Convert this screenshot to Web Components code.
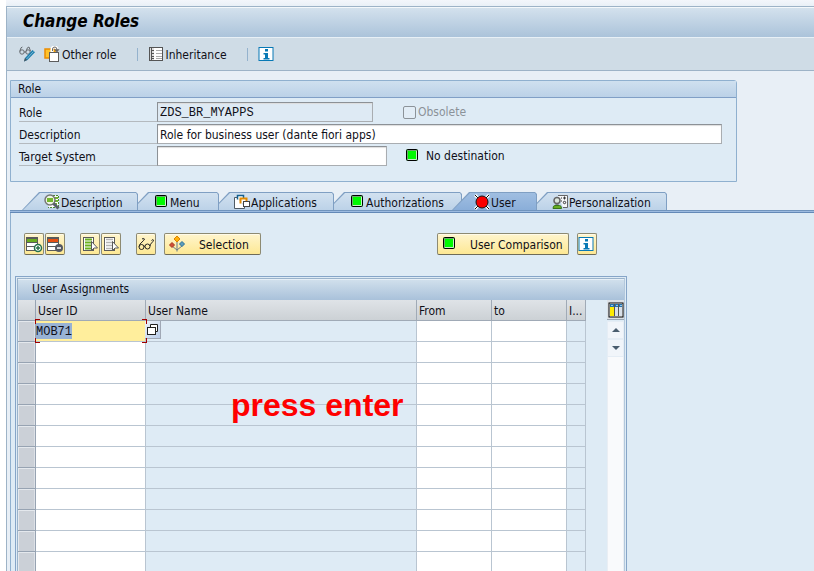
<!DOCTYPE html>
<html lang="en">
<head>
<meta charset="utf-8">
<title>Change Roles</title>
<style>
html,body{margin:0;height:100%;overflow:hidden}
body{font:12px/16px "DejaVu Sans Condensed","Open Sans",sans-serif;color:#101018;background:#fff}
</style>
</head>
<body>
<role-page></role-page>
<script>
const ICONS = {
change:[16,16,`<g fill="none" stroke="#666b70"><circle cx="3" cy="6" r="2.2"/><circle cx="9" cy="6" r="2.2"/><path d="M.7 5.5 2 1.8 3.4 1M7 5.5 8.4 1.8 10 1 11.5 5M5 6h2"/></g><path d="M5 15.5 6 12 13.5 4 16 6.3 8.5 14Z" fill="#1d7fae"/><path d="m7.5 13 7-7.5" stroke="#7db7d2"/><path d="m5 15.5 1-3.5 2 2Z" fill="#4c555c"/>`],
other:[16,16,`<rect x="1" y="3" width="10" height="9" fill="#ffc32b" stroke="#ec8c00" stroke-width="1.5"/><rect x="5.5" y="6.5" width="9" height="9" fill="#fff" stroke="#5c5c5c"/><path d="M8 6V3q0-2 3-2 2 0 2 3" fill="none" stroke="#fff" stroke-width="3"/><path d="M8.5 5V3q0-2 2.500-2 2 0 2 3" fill="none" stroke="#666"/><path d="M10 3.300h5.500L13 6.500Z" fill="#666"/>`],
inherit:[16,16,`<rect x="1.500" y="1.500" width="13" height="13" fill="#fff" stroke="#555"/><path d="M2 2h4v12H2z" fill="#ddd"/><path d="M3.500 2v12M4 4.500h2M4 7.500h2M4 10.500h2M4 12.500h2" stroke="#555" fill="none"/><path d="M8 4.500h6M8 7.500h6M8 10.500h6M8 12.500h6" stroke="#aaa" fill="none"/>`],
info:[16,16,`<rect x="1" y="1.500" width="14" height="13" fill="#fff" stroke="#0879b5"/><path d="M7 3h3v2.500H7zM5.500 7H10v5h1.500v1.500h-6V12H7V8.500H5.500z" fill="#0879b5"/>`],
green:[16,16,`<rect x="2.500" y="1.500" width="11" height="11" rx="1" fill="#00f900" stroke="#000"/><path d="M3.500 12V2.500H13" fill="none" stroke="#70a870"/><path d="M12.500 3v8.500H4" fill="none" stroke="#c7efc7"/>`],
red:[16,16,`<path d="M1 1l14 14M15 1 1 15" stroke="#fff" stroke-width="3"/><path d="M1 1l14 14M15 1 1 15" stroke="#111"/><circle cx="8" cy="8" r="6" fill="#fa0000" stroke="#151515"/>`],
desc:[16,16,`<path d="M9 1.500h5.500v12H4" fill="#fff" stroke="#4d8b2e" stroke-dasharray="2 1"/><path d="M11 4h3M11 7h3M10 10h3" stroke="#71b32c" stroke-width="2"/><circle cx="6" cy="6" r="5" fill="#edf5e3" stroke="#777" stroke-width="1.500"/><path d="M3 4h6v4H3z" fill="#75b72e"/><path d="m9.500 9.500 5 5" stroke="#58606a" stroke-width="3"/>`],
apps:[16,16,`<path d="M3 3.500H.500v11h10V13" fill="#fff" stroke="#4f5a65"/><path d="M3.500 5.500v-4h6v3" fill="#fff" stroke="#16618f" stroke-width="1.500"/><path d="M6.500 9.500v-5h6v3" fill="#fff" stroke="#e48b00" stroke-width="2"/><rect x="9.500" y="7.500" width="6" height="5" fill="#fff" stroke="#444"/>`],
person:[16,16,`<path d="M6 1.500h9.500v12H11" fill="#f5f7f9" stroke="#666"/><path d="M9 4h1M11 4h3M12.500 2.500v3M9 7h1" stroke="#333"/><circle cx="12.500" cy="8.500" r="1.200" fill="none" stroke="#333"/><circle cx="5" cy="6.500" r="3" fill="#dce7df" stroke="#666" stroke-width="1.500"/><path d="M5 9v2M3 11h4" stroke="#666"/><path d="M1 14.500q0-3 2-3h4.500q2 0 2 3z" fill="#68ae22" stroke="#397619"/>`],
add:[18,18,`<rect x="1.500" y="2.500" width="11" height="13" fill="#fff" stroke="#5a5a5a"/><rect x="2" y="4" width="10" height="3" fill="#69ad20"/><path d="M1 3.500h12M1 7.500h12M1 11.500h12" stroke="#5a5a5a"/><circle cx="13" cy="13" r="3.500" fill="#fff" stroke="#26714b" stroke-width="1.500"/><path d="M11 13h4M13 11v4" stroke="#26714b" stroke-width="1.500"/>`],
del:[18,18,`<rect x="1.500" y="2.500" width="11" height="13" fill="#fff" stroke="#5a5a5a"/><rect x="2" y="4" width="10" height="3" fill="#e65012"/><path d="M1 3.500h12M1 7.500h12M1 11.500h12" stroke="#5a5a5a"/><circle cx="13" cy="13" r="4" fill="#555963"/><path d="M11 13h4" stroke="#fff" stroke-width="1.500"/>`],
selall:[18,18,`<rect x="2.500" y="2.500" width="10" height="13" fill="#fff" stroke="#5a5a5a"/><path d="M4 4.500h7M4 7.500h7M4 10.500h7M4 13.500h7" stroke="#6bb020" stroke-width="2"/><path d="M10.500 6.500v9l2.500-2.500h3.500Z" fill="#fff" stroke="#5a5a5a"/>`],
desel:[18,18,`<rect x="2.500" y="2.500" width="10" height="13" fill="#fff" stroke="#5a5a5a"/><path d="M4 4.500h7M4 7.500h7M4 10.500h7M4 13.500h7" stroke="#b5b5b5" stroke-width="1.500"/><path d="M10.500 6.500v9l2.500-2.500h3.500Z" fill="#fff" stroke="#5a5a5a"/>`],
glasses:[18,18,`<g fill="none" stroke="#222"><circle cx="4.500" cy="12" r="2.500"/><circle cx="10.500" cy="11.500" r="2.500"/><path d="M2 11.500Q2.500 9 5 7q1.500-1 2.500-3-1.500-1-2.500 0M7 11.500l1-.5M13 11q.5-2 1.500-3 1.500-1 2-3-1-1-2 .5"/></g>`],
diamond:[18,18,`<path d="M9 5v11.500M4 11l5 4 5-4" fill="none" stroke="#687b88"/><path d="m9 1 3 3-3 3-3-3Z" fill="#ffb10a" stroke="#dc8300"/><path d="m4 7.500 2.500 2.500-2.500 2.500L1.500 10Z" fill="#cf4e38" stroke="#a8361f"/><path d="m14 6.500 2.500 2.500-2.500 2.500L11.500 9Z" fill="#5d9dbd" stroke="#246f99"/>`],
match:[14,14,`<path d="M4.500 4V1.500h7v7H9" fill="#fff" stroke="#222"/><rect x="1.500" y="4.500" width="8" height="7" fill="#fff" stroke="#222"/>`],
config:[16,16,`<rect x="1" y="1" width="14" height="14" fill="#fff" stroke="#000"/><rect x="2" y="2" width="12" height="3" fill="#2472ae"/><rect x="2" y="5" width="4" height="9" fill="#ffeb00"/><path d="M7 5h3v9H7zM11 5h3v9h-3z" fill="#d9e0e8"/><path d="M6.500 2v12M10.500 2v12" stroke="#555"/><path d="M3 3.500h2M8 3.500h2M12 3.500h2" stroke="#8fc6ed"/>`],
up:[10,6,`<path d="M1 5 5 1l4 4Z" fill="#4a5d6e"/>`],
down:[10,6,`<path d="M1 1h8L5 5Z" fill="#4a5d6e"/>`]
};
const define = (name, html, setup) => customElements.define(name, class extends HTMLElement {
  connectedCallback(){
    if(this.shadowRoot) return;
    const t=document.createElement('template'); t.innerHTML=html;
    const root=this.attachShadow({mode:'open'});
    root.append(t.content.cloneNode(true));
    if(setup) setup(this,root);
  }
});
define('ui-icon','<style>:host{display:inline-flex;flex:none}svg{display:block}</style><svg aria-hidden="true"></svg>',(el,root)=>{
  const [w,h,body]=ICONS[el.getAttribute('name')], s=root.querySelector('svg');
  s.setAttribute('width',w);s.setAttribute('height',h);s.setAttribute('viewBox',`0 0 ${w} ${h}`);s.innerHTML=body;
});
define('title-bar',`<style>
:host{display:block;border-top:1px solid #f4f8fb;background:linear-gradient(#d3e1ed,#abc3da);border-bottom:1px solid #e8f0f6;padding:3px 16px 6px}
h1{margin:0;font:italic bold 17px/20px "DejaVu Sans Condensed","Open Sans",sans-serif;color:#000}
</style><h1><slot></slot></h1>`);
define('flat-button',`<style>
:host{display:flex}
button{all:unset;display:flex;align-items:center;gap:2px;font:inherit;color:inherit}
span{padding-top:2px}
span:empty{display:none}
</style><button type="button"><slot name="icon"></slot><span></span></button>`,(el,root)=>{
  const l=el.getAttribute('label');
  if(el.hasAttribute('icon-only')) root.querySelector('button').setAttribute('aria-label',l);
  else root.querySelector('span').textContent=l;
});
define('app-toolbar',`<style>
:host{display:flex;align-items:center;height:32px;padding-left:12px;background:#cfdce6;border-bottom:1px solid #9db3c7}
.sep{width:1px;height:13px;margin:0 10px 0 20px;background:#94b2cd}
.first{margin-right:9px}
</style>
<flat-button class="first" icon-only label="Display or change"><ui-icon slot="icon" name="change"></ui-icon></flat-button>
<flat-button label="Other role"><ui-icon slot="icon" name="other"></ui-icon></flat-button><span class="sep"></span>
<flat-button label="Inheritance"><ui-icon slot="icon" name="inherit"></ui-icon></flat-button><span class="sep"></span>
<flat-button icon-only label="Information"><ui-icon slot="icon" name="info"></ui-icon></flat-button>`);
define('group-box',`<style>
:host{display:block;border:1px solid #8fb0cf;border-radius:0 3px 0 0;background:#deebf5}
h2{margin:0;font:inherit;line-height:16px;padding:0 7px;background:linear-gradient(#cfe0ef,#bbd1e7);border-bottom:1px solid #809fc6}
div{padding:4px 14px 15px 8px}
</style><h2></h2><div><slot></slot></div>`,(el,root)=>root.querySelector('h2').textContent=el.getAttribute('heading'));
define('role-form',`<style>
:host{display:grid;gap:2px}
.row{display:flex;align-items:center;height:20px}
label.name{flex:none;box-sizing:border-box;width:138px;height:20px;padding-top:1px;line-height:20px;border-bottom:1px solid #b4babf}
input.t{box-sizing:border-box;height:20px;padding:1px 2px 0;margin:0;border:1px solid #a9adb1;border-top-color:#8c9196;border-left-color:#8c9196;box-shadow:inset 0 1px 1px #ddd;background:#fff;font:inherit;color:inherit;outline:0;border-radius:0}
#role{width:216px;background:#deeaf4;font-family:"Liberation Mono",monospace}
#desc{flex:1;min-width:0}
#target{width:230px}
.after{display:flex;align-items:center;margin-left:30px;gap:2px;color:#8b9299}
.dest{display:flex;align-items:center;margin-left:17px;gap:6px}
input[type=checkbox]{appearance:none;width:13px;height:13px;box-sizing:border-box;margin:0;border:1px solid #8c9399;border-radius:2px;background:#e2edf6}
</style>
<div class="row"><label class="name" for="role">Role</label><input class="t" id="role" value="ZDS_BR_MYAPPS" readonly><label class="after"><input type="checkbox" disabled>Obsolete</label></div>
<div class="row"><label class="name" for="desc">Description</label><input class="t" id="desc" value="Role for business user (dante fiori apps)"></div>
<div class="row"><label class="name" for="target">Target System</label><input class="t" id="target"><span class="dest"><ui-icon name="green"></ui-icon>No destination</span></div>`);
define('tab-item',`<style>
:host{display:block;margin-left:-7px;position:relative;z-index:var(--z)}
:host(:first-child){margin-left:0}
:host([active]){margin-left:-10px}
button{all:unset;box-sizing:border-box;display:grid;width:var(--w);height:18px;background:#7f9fc3;clip-path:polygon(17px 0,calc(100% - 2px) 0,100% 2px,100% 100%,0 100%)}
span{display:flex;align-items:center;gap:1px;padding:2px 0 0 22px;height:16px;white-space:nowrap;background:linear-gradient(#d3e2f0,#bcd2e8);clip-path:polygon(18px 1px,calc(100% - 2px) 1px,calc(100% - 1px) 3px,calc(100% - 1px) 100%,1px 100%)}
b{font-weight:inherit;padding-top:2px}
:host([active]) span{background:linear-gradient(#a1bfe2,#8aaed9)}
</style><button type="button" role="tab"><span><slot name="icon"></slot><b></b></span></button>`,(el,root)=>{
  root.querySelector('button').setAttribute('aria-selected',el.hasAttribute('active'));
  root.querySelector('b').textContent=el.getAttribute('label');
});
customElements.define('tab-strip',class extends HTMLElement{
  connectedCallback(){
    const tabs=[['desc','Description',116],['green','Menu',88],['apps','Applications',122],['green','Authorizations',135],['red','User',85],['person','Personalization',137]];
    this.attachShadow({mode:'open'}).innerHTML=`<style>:host{display:block}
    .tabs{display:flex;padding-left:12px;isolation:isolate}
    .line{height:1px;background:#9dbbe0;border-top:1px solid #7094bd;border-bottom:1px solid #6389b7}
    tab-item{flex:none}</style>
    <div class="tabs" role="tablist">${tabs.map(([i,t,w],n)=>`<tab-item style="--w:${w}px;--z:${t==='User'?9:6-n}" label="${t}" ${t==='User'?'active':''}><ui-icon slot="icon" name="${i}"></ui-icon></tab-item>`).join('')}</div><div class="line"></div>`;
  }
});
define('push-button',`<style>
:host{display:block}
button{box-sizing:border-box;display:flex;align-items:center;height:22px;min-width:20px;padding:0;margin:0;border:1px solid #8d8a72;border-bottom-color:#6e6b58;border-radius:2px;background:linear-gradient(#fff5cd,#fde894);font:inherit;color:inherit;box-shadow:inset 0 1px #fffbe8}
span{padding-top:2px}
span:empty{display:none}
:host([wide]) button{gap:13px;min-width:97px;padding:0 5px 0 3px}
</style><button type="button"><slot name="icon"></slot><span></span></button>`,(el,root)=>{
  const l=el.getAttribute('label');
  if(el.hasAttribute('wide')) root.querySelector('span').textContent=l;
  else root.querySelector('button').setAttribute('aria-label',l);
});
define('user-toolbar',`<style>
:host{display:flex;gap:8px;padding:20px 0 0 13px}
.g{display:flex;gap:1px;margin-right:7px}
.compare{margin-left:168px}
</style>
<div class="g"><push-button label="Insert row"><ui-icon slot="icon" name="add"></ui-icon></push-button><push-button label="Delete row"><ui-icon slot="icon" name="del"></ui-icon></push-button></div>
<div class="g"><push-button label="Select all"><ui-icon slot="icon" name="selall"></ui-icon></push-button><push-button label="Deselect all"><ui-icon slot="icon" name="desel"></ui-icon></push-button></div>
<push-button label="Display"><ui-icon slot="icon" name="glasses"></ui-icon></push-button>
<push-button wide label="Selection"><ui-icon slot="icon" name="diamond"></ui-icon></push-button>
<push-button wide class="compare" label="User Comparison"><ui-icon slot="icon" name="green"></ui-icon></push-button>
<push-button label="Information"><ui-icon slot="icon" name="info"></ui-icon></push-button>`);
define('user-grid',`<style>
:host{display:block;position:relative;border:1px solid #86a5c8;padding:1px;background:#deebf5}
.frame{border:1px solid #9ab3cb;border-bottom:0;border-right-color:#b3c8dc}
h2{margin:0;font:inherit;line-height:18px;padding:0 14px;height:20px;border-top:1px solid #e6eff7;background:linear-gradient(#d0dfec,#a9c1da)}
.body{display:flex}
table{flex:1;min-width:0;table-layout:fixed;border-collapse:separate;border-spacing:0}
th,td{box-sizing:border-box;height:21px;padding:2px 0 0 2px;border:solid #b9c5d1;border-width:0 1px 1px 0;text-align:left;font-weight:normal;white-space:nowrap;overflow:hidden;background:#deebf5}
thead th{background:linear-gradient(#dfe3e7,#ccd1d5);border-color:#a0aab6}
td.w{background:#fff}
tbody th,thead th:first-child{border:solid #97a3b2;border-width:0 1px 1px 0}
tbody th{background:#cbd0d7;box-shadow:inset 1px 1px #e4e8ed,inset -1px 0 #dce0e6}
tbody td.key{padding:0;overflow:visible;position:relative}
input{all:unset;display:block;box-sizing:border-box;width:100%;height:20px;padding-top:1px;font:12px/19px "Liberation Mono",monospace;background:linear-gradient(#98b2d4,#98b2d4) 0 2px/5ch 16px no-repeat #ffee9c}
.key i{position:absolute;width:5px;height:5px;border:0 solid #a00000;box-sizing:border-box;z-index:1}
.key i.a{left:-1px;top:-2px;border-width:1px 0 0 1px}
.key i.b{right:-2px;top:-2px;border-width:1px 1px 0 0}
.key i.c{left:-1px;bottom:-2px;border-width:0 0 1px 1px}
.key i.d{right:-2px;bottom:-2px;border-width:0 1px 1px 0}
.key button{all:unset;position:absolute;left:100%;top:0;width:16px;height:18px;display:flex;align-items:center;justify-content:center;background:linear-gradient(135deg,#eef3fa,#bacde9);border:solid #a0a8b5;border-width:0 1px 1px 0;box-sizing:border-box}
aside{width:17px;margin-left:21px;display:flex;flex-direction:column}
aside button{all:unset;box-sizing:border-box;display:flex;justify-content:center;align-items:center;height:18px;background:#f1f5fa;border:1px solid #e5edf5}
aside .cfg{height:20px;background:#dce1e6;border:0;border-bottom:1px solid #9aa6b3;margin-bottom:1px}
.track{flex:1;background:#f9fafc;border:solid #e9eef4;border-width:0 1px}
</style>
<div class="frame"><h2>User Assignments</h2><div class="body"><table aria-label="User Assignments">
<colgroup><col style="width:18px"><col style="width:110px"><col><col style="width:75px"><col style="width:75px"><col style="width:19px"></colgroup>
<thead><tr><th></th><th>User ID</th><th>User Name</th><th>From</th><th>to</th><th>I...</th></tr></thead><tbody></tbody></table>
<aside><button class="cfg" type="button" aria-label="Configure"><ui-icon name="config"></ui-icon></button><button type="button" aria-label="Scroll up"><ui-icon name="up"></ui-icon></button><button type="button" aria-label="Scroll down"><ui-icon name="down"></ui-icon></button><div class="track"></div></aside></div></div>`,(el,root)=>{
  const entry='<input value="MOB71" aria-label="User ID"><i class="a"></i><i class="b"></i><i class="c"></i><i class="d"></i><button type="button" aria-label="Search help"><ui-icon name="match"></ui-icon></button>';
  root.querySelector('tbody').innerHTML=Array.from({length:12},(_,n)=>`<tr><th></th><td class="w${n?'':' key'}">${n?'':entry}</td><td></td><td class="w"></td><td class="w"></td><td></td></tr>`).join('');
});
define('screen-note',`<style>
:host{position:absolute;left:216px;top:111px;font:bold 32px/36px "Liberation Sans",sans-serif;color:#f00;white-space:nowrap}
</style><slot></slot>`);
define('role-page',`<style>
:host{display:flex;flex-direction:column;min-height:100%;box-sizing:border-box;padding:6px 0 0 6px;background:linear-gradient(90deg,#fff 6px,transparent 6px),linear-gradient(#f3f6fb,#e8eff6 7px)}
.app{flex:1;display:flex;flex-direction:column;border:solid #9db3c7;border-width:1px 0 0 1px;background:#e8eff6}
main{flex:1;display:flex;flex-direction:column;padding:9px 0 0 3px}
group-box{width:100%;max-width:727px;box-sizing:border-box;margin-bottom:10px}
.pane{flex:1;border-left:1px solid #8fb0cf;background:#deebf5}
.grid{position:relative;max-width:612px;margin:21px 0 0 4px}
</style><div class="app"><title-bar>Change Roles</title-bar><app-toolbar></app-toolbar>
<main><group-box heading="Role"><role-form></role-form></group-box><tab-strip></tab-strip>
<div class="pane"><user-toolbar></user-toolbar><div class="grid"><user-grid></user-grid><screen-note>press enter</screen-note></div></div></main></div>`);
</script>
</body>
</html>
